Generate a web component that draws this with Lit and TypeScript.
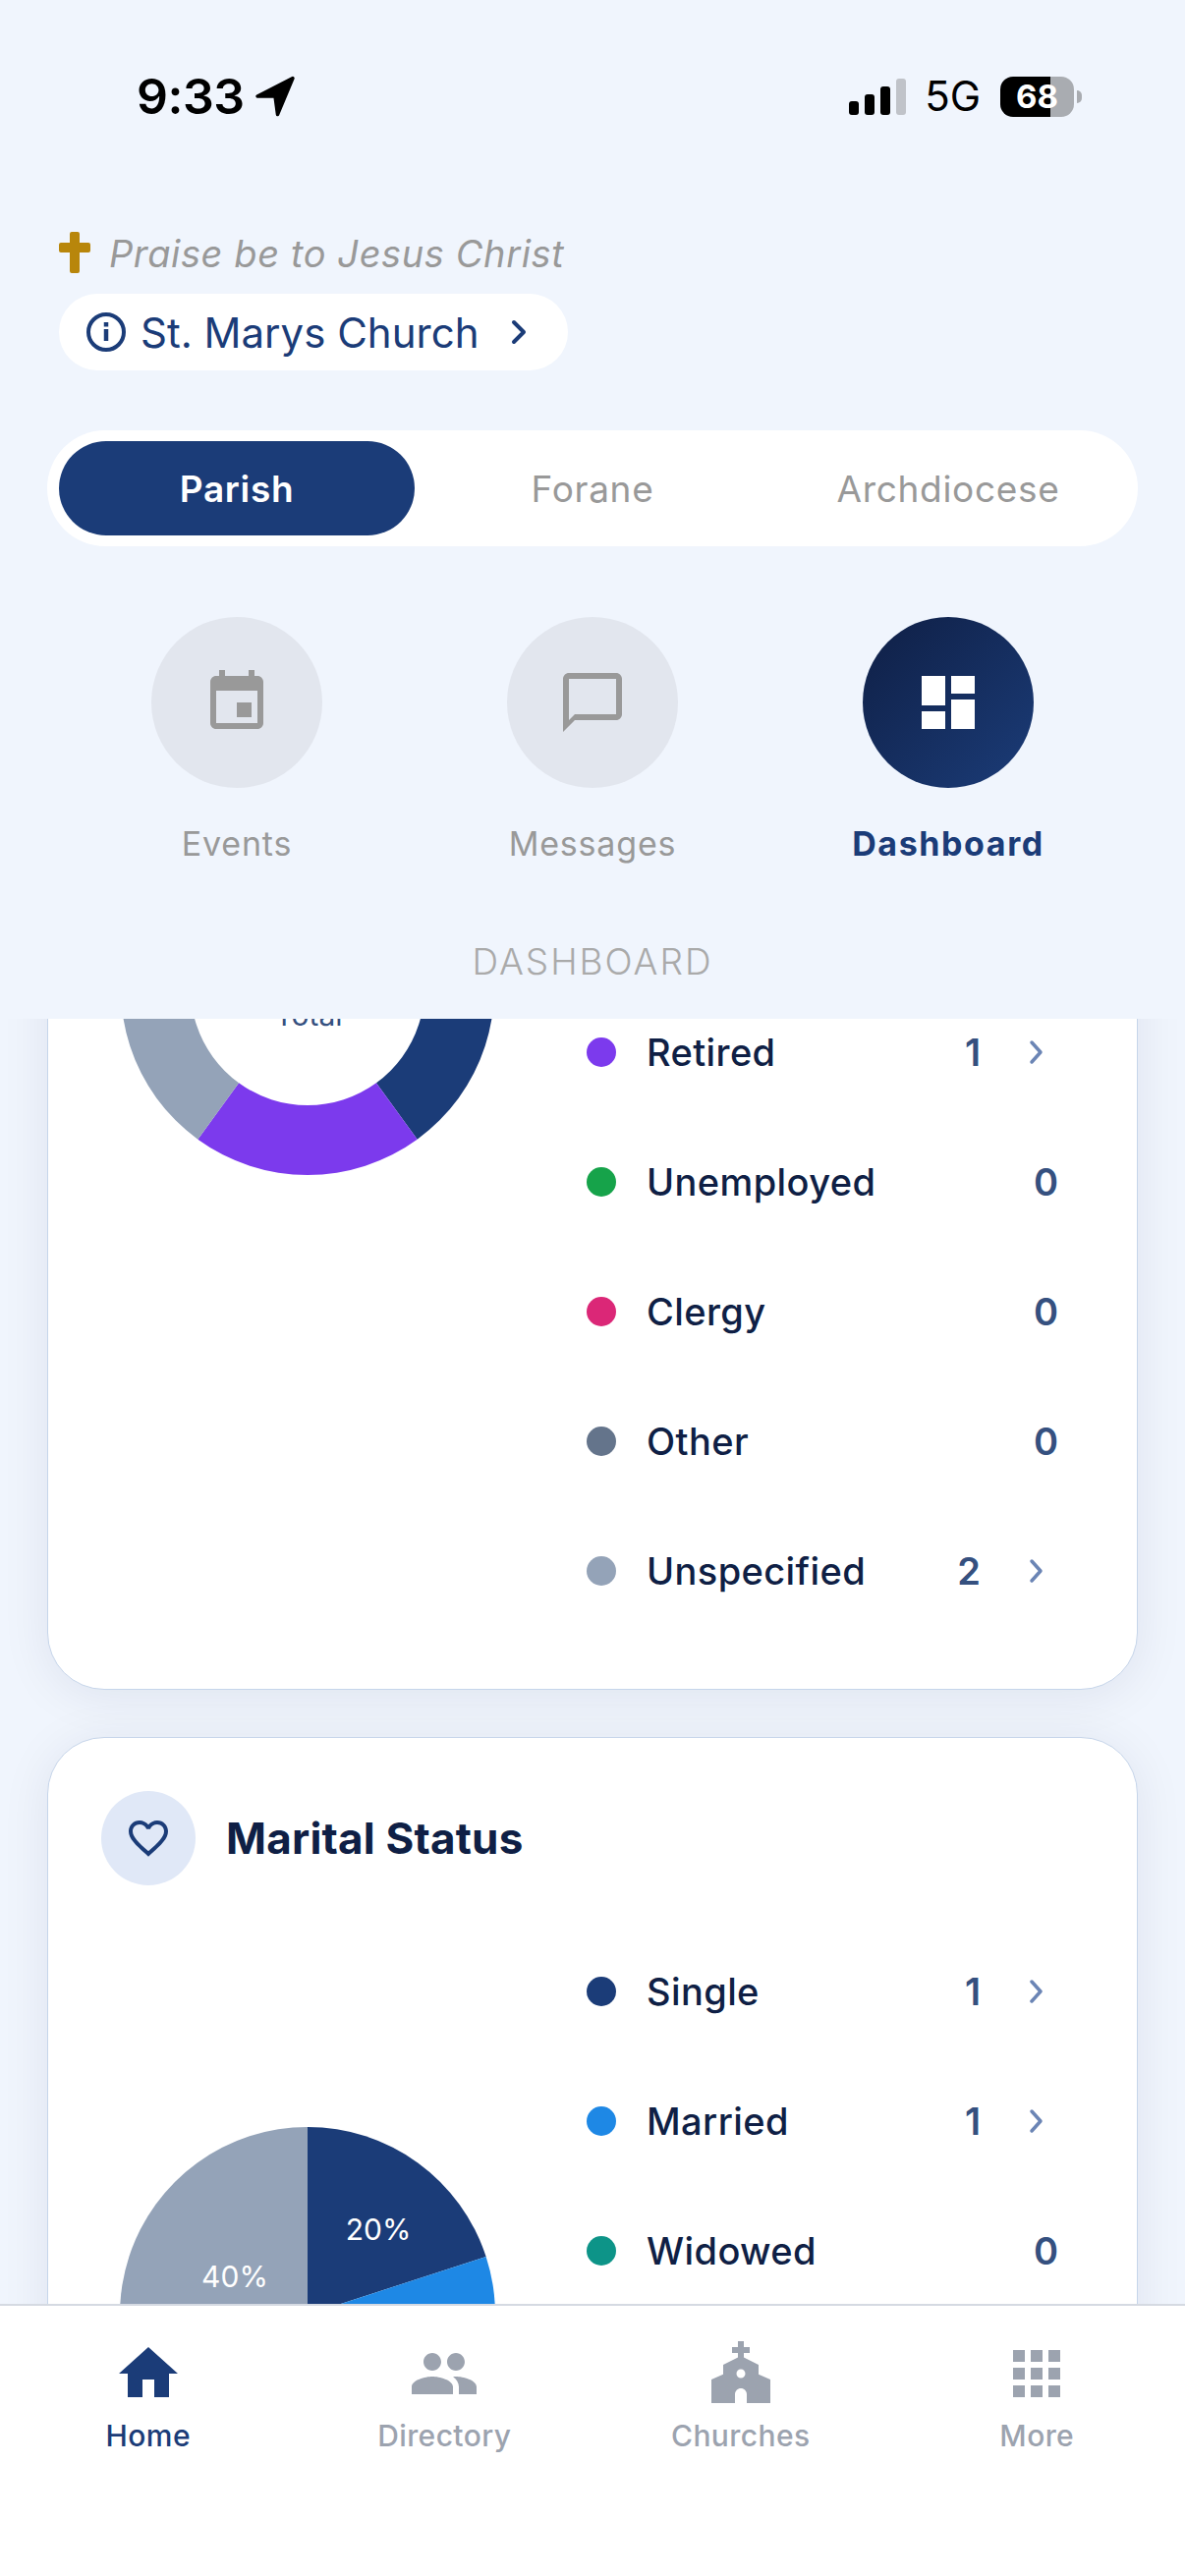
import { LitElement, html, css, svg } from 'lit';
import { customElement } from 'lit/decorators.js';

const EVENT_ICON = 'M17 12h-5v5h5v-5zM16 1v2H8V1H6v2H5c-1.11 0-1.99.9-1.99 2L3 19c0 1.1.89 2 2 2h14c1.1 0 2-.9 2-2V5c0-1.1-.9-2-2-2h-1V1h-2zm3 18H5V8h14v11z';
const CHAT_ICON = 'M20 2H4c-1.1 0-2 .9-2 2v18l4-4h14c1.1 0 2-.9 2-2V4c0-1.1-.9-2-2-2zm0 14H6l-2 2V4h16v12z';
const DASH_ICON = 'M3 13h8V3H3v10zm0 8h8v-6H3v6zm10 0h8V11h-8v10zm0-18v6h8V3h-8z';
const HOME_ICON = 'M10 20v-6h4v6h5v-8h3L12 3 2 12h3v8z';
const PEOPLE_ICON = 'M16 11c1.66 0 2.99-1.34 2.99-3S17.66 5 16 5c-1.66 0-3 1.34-3 3s1.34 3 3 3zm-8 0c1.66 0 2.99-1.34 2.99-3S9.66 5 8 5C6.34 5 5 6.34 5 8s1.34 3 3 3zm0 2c-2.33 0-7 1.17-7 3.5V19h14v-2.5c0-2.33-4.67-3.5-7-3.5zm8 0c-.29 0-.62.02-.97.05 1.16.84 1.97 1.97 1.97 3.45V19h6v-2.5c0-2.33-4.67-3.5-7-3.5z';
const CHURCH_ICON = 'M18 12.22V9l-5-2.5V5h2V3h-2V1h-2v2H9v2h2v1.5L6 9v3.22L2 14v8h8v-3c0-1.1.9-2 2-2s2 .9 2 2v3h8v-8l-4-1.78zM12 13.5c-.83 0-1.5-.67-1.5-1.5s.67-1.5 1.5-1.5 1.5.67 1.5 1.5-.67 1.5-1.5 1.5z';
const APPS_ICON = 'M4 8h4V4H4v4zm6 12h4v-4h-4v4zm-6 0h4v-4H4v4zm0-6h4v-4H4v4zm6 0h4v-4h-4v4zm6-10v4h4V4h-4zm-6 4h4V4h-4v4zm6 6h4v-4h-4v4zm0 6h4v-4h-4v4z';
const HEART_ICON = 'M16.5 3c-1.74 0-3.41.81-4.5 2.09C10.91 3.81 9.24 3 7.5 3 4.42 3 2 5.42 2 8.5c0 3.78 3.4 6.86 8.55 11.54L12 21.35l1.45-1.32C18.6 15.36 22 12.28 22 8.5 22 5.42 19.58 3 16.5 3zm-4.4 15.55l-.1.1-.1-.1C7.14 14.24 4 11.39 4 8.5 4 6.5 5.5 5 7.5 5c1.54 0 3.04.99 3.57 2.36h1.87C13.46 5.99 14.96 5 16.5 5c2 0 3.5 1.5 3.5 3.5 0 2.89-3.14 5.74-7.9 10.05z';

const ACTIONS = [
  { label: 'Events', icon: EVENT_ICON, active: false },
  { label: 'Messages', icon: CHAT_ICON, active: false },
  { label: 'Dashboard', icon: DASH_ICON, active: true },
];

const TABS = [
  { label: 'Home', icon: HOME_ICON, active: true },
  { label: 'Directory', icon: PEOPLE_ICON, active: false },
  { label: 'Churches', icon: CHURCH_ICON, active: false },
  { label: 'More', icon: APPS_ICON, active: false },
];

const EMPLOYMENT = [
  { label: 'Retired', color: '#7c3aed', count: 1 },
  { label: 'Unemployed', color: '#16a34a', count: 0 },
  { label: 'Clergy', color: '#db2777', count: 0 },
  { label: 'Other', color: '#64748b', count: 0 },
  { label: 'Unspecified', color: '#94a3b8', count: 2 },
];

const MARITAL = [
  { label: 'Single', color: '#1b3c78', count: 1 },
  { label: 'Married', color: '#1e88e5', count: 1 },
  { label: 'Widowed', color: '#0d9488', count: 0 },
];

// sweep helper, degrees clockwise from twelve o'clock, around a 200,200 centre
function wedge(start: number, end: number, r: number, inner = 0) {
  const pt = (a: number, rad: number) => {
    const t = (a * Math.PI) / 180;
    return `${(200 + rad * Math.sin(t)).toFixed(2)} ${(200 - rad * Math.cos(t)).toFixed(2)}`;
  };
  const large = end - start > 180 ? 1 : 0;
  if (!inner) return `M200 200L${pt(start, r)}A${r} ${r} 0 ${large} 1 ${pt(end, r)}Z`;
  return `M${pt(start, r)}A${r} ${r} 0 ${large} 1 ${pt(end, r)}L${pt(end, inner)}A${inner} ${inner} 0 ${large} 0 ${pt(start, inner)}Z`;
}

@customElement('app-root')
export class AppRoot extends LitElement {
  static styles = css`
    :host {
      display: flex;
      flex-direction: column;
      height: 100vh;
      overflow: hidden;
      background: #f0f5fd;
      font-family: Inter, 'Noto Sans', sans-serif;
      color: #0f1f45;
    }

    .header {
      position: relative;
      z-index: 2;
      flex: none;
      background: #f0f5fd;
      padding-bottom: 36px;
    }

    .status {
      display: flex;
      align-items: center;
      height: 58px;
      margin-top: 69px;
      padding: 0 113px 0 139px;
      color: #000;
    }

    .time {
      font-size: 50px;
      font-weight: 600;
      line-height: 58px;
      letter-spacing: -0.5px;
    }

    .arrow {
      margin-left: 10px;
    }

    .signal {
      display: flex;
      align-items: flex-end;
      gap: 6px;
      height: 37px;
      margin-left: auto;
    }

    .signal span {
      width: 10px;
      border-radius: 3px;
      background: #000;
    }

    .signal .h1 { height: 14px; }
    .signal .h2 { height: 21px; }
    .signal .h3 { height: 29px; }
    .signal .h4 { height: 37px; background: #c0c3c9; }

    .net {
      margin-left: 19px;
      font-size: 42px;
      font-weight: 400;
      line-height: 58px;
    }

    .battery {
      position: relative;
      display: flex;
      align-items: center;
      justify-content: center;
      width: 75px;
      height: 41px;
      margin-left: 20px;
      border-radius: 13px;
      background: linear-gradient(90deg, #000 68%, #a9acb1 68%);
      color: #fff;
      font-size: 33px;
      font-weight: 700;
    }

    .battery::after {
      content: '';
      position: absolute;
      left: 78px;
      top: 14px;
      width: 5px;
      height: 13px;
      border-radius: 0 6px 6px 0;
      background: #a9acb1;
    }

    .greeting {
      display: flex;
      align-items: center;
      gap: 19px;
      margin: 109px 0 0 60px;
      height: 42px;
      color: #999;
      font-size: 38px;
      font-style: italic;
      letter-spacing: 0.6px;
      line-height: 44px;
    }

    .greeting span {
      padding-top: 1px;
    }

    .pill {
      display: flex;
      align-items: center;
      width: 518px;
      height: 78px;
      box-sizing: border-box;
      margin: 21px 0 0 60px;
      padding-left: 28px;
      border-radius: 39px;
      background: #fff;
      color: #1b3c78;
      font-size: 42px;
    }

    .pill-name {
      margin-left: 15px;
    }

    .pill-chevron {
      margin-left: 31px;
    }

    .segments {
      display: grid;
      grid-template-columns: repeat(3, 1fr);
      height: 118px;
      box-sizing: border-box;
      margin: 61px 48px 0;
      padding: 11px 12px;
      border-radius: 59px;
      background: #fff;
    }

    .segment {
      display: flex;
      align-items: center;
      justify-content: center;
      border-radius: 48px;
      color: #999;
      font-size: 37px;
      letter-spacing: 0.7px;
    }

    .segment.on {
      background: #1b3c78;
      color: #fff;
      font-weight: 600;
    }

    .actions {
      display: grid;
      grid-template-columns: repeat(3, 1fr);
      margin: 72px 60px 0;
    }

    .action {
      display: flex;
      flex-direction: column;
      align-items: center;
      color: #999;
      font-size: 34px;
      letter-spacing: 0.8px;
      line-height: 44px;
    }

    .disc {
      display: flex;
      align-items: center;
      justify-content: center;
      width: 174px;
      height: 174px;
      margin-bottom: 35px;
      border-radius: 50%;
      background: #e2e6ee;
    }

    .disc svg {
      fill: #999;
    }

    .action.on {
      color: #1b3c78;
      font-weight: 700;
      letter-spacing: 1.6px;
    }

    .action.on .disc {
      background: linear-gradient(135deg, #0f1f45, #1b3c78);
    }

    .action.on .disc svg {
      fill: #fff;
    }

    .page-title {
      margin-top: 76px;
      color: #aaa;
      font-size: 37px;
      font-weight: 300;
      letter-spacing: 2px;
      line-height: 44px;
      text-align: center;
    }

    .scroll {
      flex: 1;
      min-height: 0;
      overflow: hidden;
    }

    /* scrolled offset: the first card starts above the visible area */
    .content {
      display: flex;
      flex-direction: column;
      gap: 48px;
      margin: -287px 48px 0;
    }

    .card {
      box-sizing: border-box;
      padding: 54px 80px 54px 54px;
      border: 1px solid #c6d5ea;
      border-radius: 58px;
      background: #fff;
      box-shadow: 0 6px 50px rgba(15, 31, 69, 0.08);
    }

    .card-head {
      display: flex;
      align-items: center;
      gap: 31px;
      height: 96px;
      margin-bottom: 42px;
      color: #0f1f45;
      font-size: 44px;
      font-weight: 700;
      letter-spacing: 0.2px;
    }

    .head-icon {
      display: flex;
      align-items: center;
      justify-content: center;
      width: 96px;
      height: 96px;
      border-radius: 50%;
      background: #e0e8f7;
    }

    .head-icon svg {
      fill: #1b3c78;
    }

    .card-body {
      display: grid;
      grid-template-columns: 494px 1fr;
    }

    .chart {
      display: block;
      margin-left: 10px;
    }

    .chart.donut {
      margin-top: 1px;
    }

    .chart.pie {
      margin-top: 195px;
    }

    .rows.scrolled {
      margin-top: 200px;
    }

    .row {
      display: flex;
      align-items: center;
      height: 132px;
    }

    .dot {
      flex: none;
      width: 30px;
      height: 30px;
      margin-right: 31px;
      border-radius: 50%;
    }

    .row-label {
      flex: 1;
      color: #0f1f45;
      font-size: 38px;
      font-weight: 500;
      letter-spacing: 0.4px;
    }

    .count {
      color: #35507f;
      font-size: 38px;
      font-weight: 600;
    }

    .row-chevron {
      margin: 0 6px 0 41px;
    }

    .tabbar {
      position: relative;
      z-index: 2;
      display: grid;
      flex: none;
      grid-template-columns: repeat(4, 1fr);
      height: 277px;
      box-sizing: border-box;
      padding-top: 33px;
      border-top: 2px solid #d5dae2;
      background: #fff;
    }

    .tab {
      display: flex;
      flex-direction: column;
      align-items: center;
      color: #9ca3af;
      font-size: 30px;
      font-weight: 500;
      letter-spacing: 0.4px;
      line-height: 36px;
    }

    .tab svg {
      margin-bottom: 9px;
      fill: #9ca3af;
    }

    .tab.on {
      color: #1b3c78;
    }

    .tab.on svg {
      fill: #1b3c78;
    }
  `;

  renderRows(rows: { label: string; color: string; count: number }[], cls = '') {
    return html`<div class="rows ${cls}">
      ${rows.map(
        r => html`<div class="row">
          <span class="dot" style="background:${r.color}"></span>
          <span class="row-label">${r.label}</span>
          <span class="count">${r.count}</span>
          ${r.count
            ? html`<svg class="row-chevron" width="32" height="32" viewBox="0 0 32 32" fill="none" stroke="#6b85b5" stroke-width="3.5" stroke-linecap="round" stroke-linejoin="round">
                <path d="M11 6l9 10-9 10" />
              </svg>`
            : ''}
        </div>`
      )}
    </div>`;
  }

  renderDonut() {
    return html`<svg class="chart donut" width="400" height="400" viewBox="0 0 400 400">
      ${svg`<path d=${wedge(0, 144, 190, 119)} fill="#1b3c78" />
      <path d=${wedge(144, 216, 190, 119)} fill="#7c3aed" />
      <path d=${wedge(216, 359.99, 190, 119)} fill="#94a3b8" />
      <text x="201" y="238" text-anchor="middle" font-size="30" fill="#35507f">Total</text>`}
    </svg>`;
  }

  renderPie() {
    return html`<svg class="chart pie" width="400" height="400" viewBox="0 0 400 400">
      ${svg`<path d=${wedge(0, 72, 191)} fill="#1b3c78" />
      <path d=${wedge(72, 144, 191)} fill="#1e88e5" />
      <path d=${wedge(144, 216, 191)} fill="#94a3b8" />
      <path d=${wedge(216, 360, 191)} fill="#94a3b8" />
      <text x="272" y="124" text-anchor="middle" font-size="30" fill="#fff">20%</text>
      <text x="126" y="172" text-anchor="middle" font-size="30" fill="#fff">40%</text>`}
    </svg>`;
  }

  render() {
    return html`
      <div class="header">
        <div class="status">
          <span class="time">9:33</span>
          <svg class="arrow" width="42" height="42" viewBox="0 0 42 42">
            <path d="M39 2.5L3 21h18l2.5 18.5z" fill="#000" stroke="#000" stroke-width="3.5" stroke-linejoin="round" />
          </svg>
          <div class="signal">
            <span class="h1"></span><span class="h2"></span><span class="h3"></span><span class="h4"></span>
          </div>
          <span class="net">5G</span>
          <span class="battery">68</span>
        </div>

        <div class="greeting">
          <svg width="32" height="42" viewBox="0 0 32 42">
            <path d="M13 0h6a2 2 0 0 1 2 2v9h9a2 2 0 0 1 2 2v6a2 2 0 0 1-2 2h-9v19a2 2 0 0 1-2 2h-6a2 2 0 0 1-2-2V21H2a2 2 0 0 1-2-2v-6a2 2 0 0 1 2-2h9V2a2 2 0 0 1 2-2z" fill="#b8860b" />
          </svg>
          <span>Praise be to Jesus Christ</span>
        </div>

        <div class="pill">
          <svg width="40" height="40" viewBox="0 0 40 40" fill="none" stroke="#1b3c78">
            <circle cx="20" cy="20" r="18" stroke-width="4" />
            <path d="M20 17v12" stroke-width="4.5" />
            <path d="M20 10v4.5" stroke-width="4.5" />
          </svg>
          <span class="pill-name">St. Marys Church</span>
          <svg class="pill-chevron" width="20" height="26" viewBox="0 0 20 26" fill="none" stroke="#1b3c78" stroke-width="4" stroke-linecap="round" stroke-linejoin="round">
            <path d="M5 3l10 10L5 23" />
          </svg>
        </div>

        <div class="segments">
          <div class="segment on">Parish</div>
          <div class="segment">Forane</div>
          <div class="segment">Archdiocese</div>
        </div>

        <div class="actions">
          ${ACTIONS.map(
            a => html`<div class="action ${a.active ? 'on' : ''}">
              <div class="disc">
                <svg width="72" height="72" viewBox="0 0 24 24"><path d=${a.icon} /></svg>
              </div>
              ${a.label}
            </div>`
          )}
        </div>

        <div class="page-title">DASHBOARD</div>
      </div>

      <div class="scroll">
        <div class="content">
          <section class="card">
            <div class="card-body">
              ${this.renderDonut()} ${this.renderRows(EMPLOYMENT, 'scrolled')}
            </div>
          </section>

          <section class="card">
            <div class="card-head">
              <span class="head-icon">
                <svg width="48" height="48" viewBox="0 0 24 24"><path d=${HEART_ICON} /></svg>
              </span>
              Marital Status
            </div>
            <div class="card-body">
              ${this.renderPie()} ${this.renderRows(MARITAL)}
            </div>
          </section>
        </div>
      </div>

      <nav class="tabbar">
        ${TABS.map(
          t => html`<div class="tab ${t.active ? 'on' : ''}">
            <svg width="72" height="72" viewBox="0 0 24 24"><path d=${t.icon} /></svg>
            ${t.label}
          </div>`
        )}
      </nav>
    `;
  }
}
